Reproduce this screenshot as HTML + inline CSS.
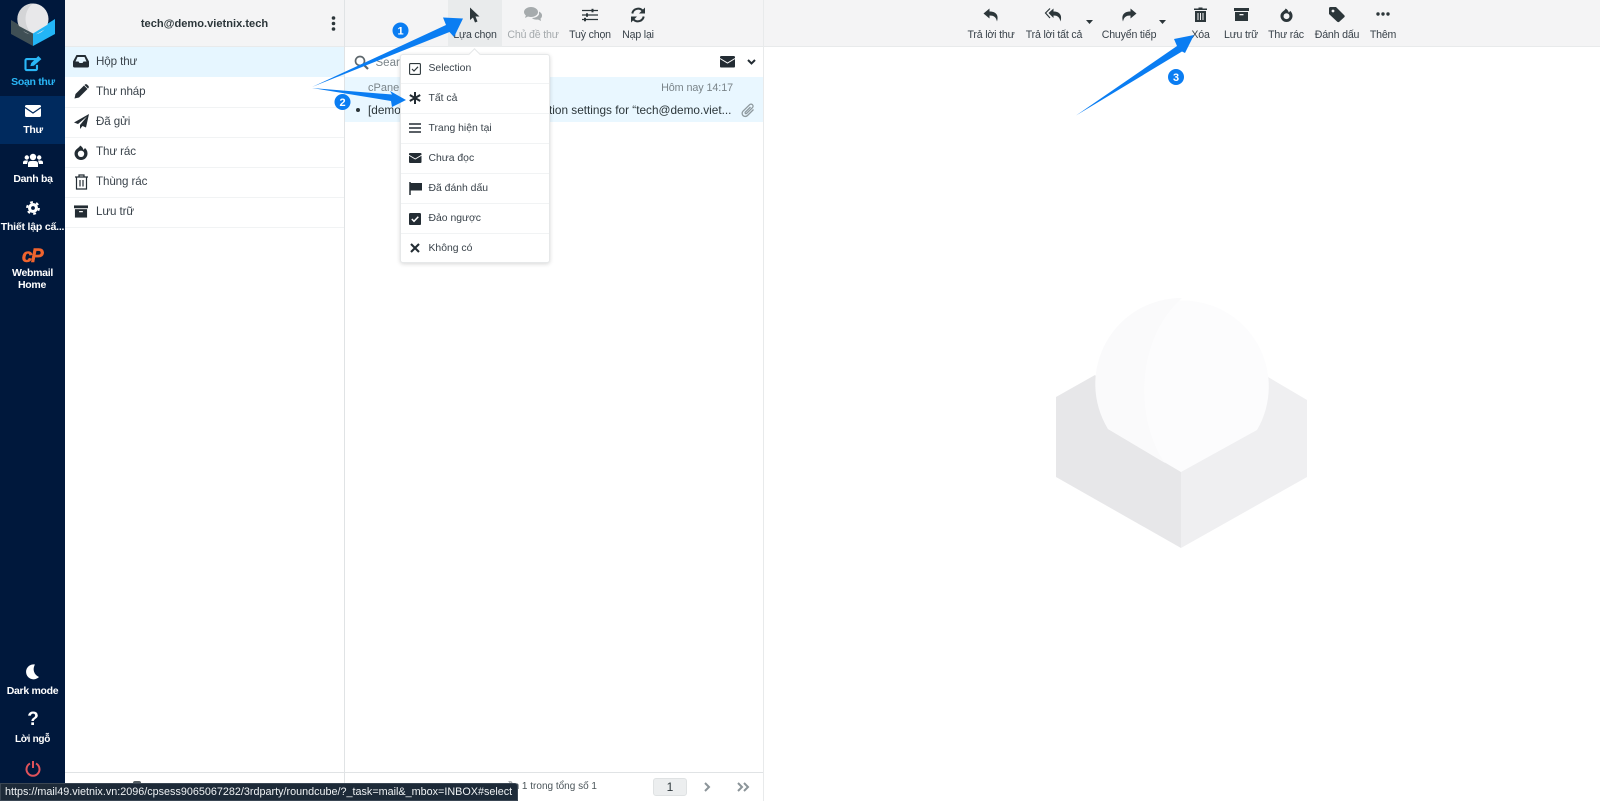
<!DOCTYPE html>
<html lang="vi"><head><meta charset="utf-8"><title>Roundcube Webmail</title>
<style>
*{box-sizing:border-box}
html,body{margin:0;padding:0;width:1600px;height:801px;overflow:hidden;background:#fff;font-family:"Liberation Sans","Noto Sans CJK SC",sans-serif;color:#2c363a}
.a{position:absolute}
svg{position:absolute;overflow:visible}
.t{position:absolute;white-space:nowrap;line-height:14px}
.c{transform:translateX(-50%)}
.nav{color:#fff;font-size:10.5px;font-weight:bold;line-height:13px;text-align:center;letter-spacing:-.3px}
.tb{font-size:10.6px;color:#39424a;letter-spacing:-.18px}
.f{font-size:11.6px;color:#39424a;left:96px;letter-spacing:-.1px}
.m{font-size:10.4px;color:#39424a;left:428.5px}
.ln{position:absolute;height:1px;background:#f1f3f4}
</style></head><body>

<!-- panels -->
<div class="a" style="left:0;top:0;width:65px;height:801px;background:#00183c"></div>
<div class="a" style="left:0;top:96px;width:65px;height:48px;background:#002a5e"></div>
<div class="a" style="left:65px;top:0;width:1535px;height:47px;background:#f4f4f5;border-bottom:1px solid #e8eaeb"></div>
<div class="a" style="left:65px;top:47px;width:280px;height:30px;background:#e6f6ff"></div>
<div class="a" style="left:345px;top:77px;width:418px;height:45px;background:#e9f7ff"></div>
<div class="a" style="left:344px;top:0;width:1px;height:801px;background:#e0e3e5"></div>
<div class="a" style="left:763px;top:0;width:1px;height:801px;background:#e8eaeb"></div>
<div class="a" style="left:448px;top:0;width:54px;height:47px;background:#e9ebec"></div>
<div class="a" style="left:65px;top:772px;width:698px;height:1px;background:#e0e3e5"></div>

<!-- logo -->
<svg style="left:0;top:0" width="65" height="50" viewBox="0 0 65 50">
<path d="M11 20 L33 33 V46 L11 34Z" fill="#3f4f55"/><path d="M55 19 L33 33 V46 L55 34Z" fill="#22b5f7"/>
<circle cx="33" cy="19" r="15.500" fill="#e8e8ea"/><path d="M33 3.500 A15.500 15.500 0 0 0 21 29 L31 33 C23 24 24 10 33 3.500Z" fill="#d4d5d7"/>
<path d="M19 27L33 33.500L47 27L47 36L33 46L19 36Z" fill="none"/>
<path d="M19 26L33 33.500V36L17 28Z" fill="#3f4f55"/><path d="M47 25L33 33.500V36L49 27Z" fill="#22b5f7"/>
</svg>

<!-- sidebar -->
<svg style="left:24px;top:56px" width="18" height="15" viewBox="0 0 20 17"><path d="M14 3.500H3A1.500 1.500 0 0 0 1.500 5V14.500A1.500 1.500 0 0 0 3 16H13A1.500 1.500 0 0 0 14.500 14.500V10" fill="none" stroke="#29b6f6" stroke-width="2.400"/><path d="M7 11.500 L8 8 L16 0 L19.500 3.500 L11 11Z" fill="#29b6f6"/></svg>
<div class="t c nav" style="left:33px;top:76px;color:#29b6f6">Soạn thư</div>
<svg style="left:25px;top:105px" width="16" height="13" viewBox="0 0 16 13"><rect width="16" height="12" rx="1.500" fill="#fff"/><path d="M0 2.500 L8 8 L16 2.500" fill="none" stroke="#002a5e" stroke-width="1.300"/></svg>
<div class="t c nav" style="left:33px;top:124px">Thư</div>
<svg style="left:23px;top:153px" width="20" height="14" viewBox="0 0 20 14"><circle cx="10" cy="4" r="3.200" fill="#fff"/><circle cx="3.800" cy="4.500" r="2.200" fill="#fff"/><circle cx="16.200" cy="4.500" r="2.200" fill="#fff"/><path d="M5 14V10.500Q5 8 8 8H12Q15 8 15 10.500V14Z" fill="#fff"/><path d="M0 11V9.500Q0 7.500 2.500 7.500H5L4 11ZM20 11V9.500Q20 7.500 17.500 7.500H15L16 11Z" fill="#fff"/></svg>
<div class="t c nav" style="left:33px;top:173px">Danh bạ</div>
<svg style="left:26px;top:201px" width="14" height="14" viewBox="0 0 14 14"><circle cx="7" cy="7" r="5" fill="#fff"/><circle cx="7" cy="7" r="5.900" fill="none" stroke="#fff" stroke-width="2" stroke-dasharray="2.800 3.380"/><circle cx="7" cy="7" r="1.900" fill="#00183c"/></svg>
<div class="t c nav" style="left:32.500px;top:221px;font-size:10.500px;letter-spacing:-.2px">Thiết lập cấ...</div>
<div class="t c" style="left:32px;top:247px;font:italic bold 19px/19px 'Liberation Sans',sans-serif;color:#f0642e;letter-spacing:-1.500px;-webkit-text-stroke:.5px #f0642e">cP</div>
<div class="t c nav" style="left:32.500px;top:267px">Webmail</div>
<div class="t c nav" style="left:32px;top:279px">Home</div>
<svg style="left:25px;top:664px" width="15" height="15" viewBox="0 0 15 15"><path d="M10 0.500A7.500 7.500 0 1 0 14 13 A8.500 8.500 0 0 1 10 0.500Z" fill="#fff"/></svg>
<div class="t c nav" style="left:32.500px;top:685px">Dark mode</div>
<div class="t c" style="left:33px;top:710px;font:bold 19px/19px 'Liberation Sans',sans-serif;color:#fff">?</div>
<div class="t c nav" style="left:32.500px;top:733px;font-size:10px">Lời ngỗ</div>
<svg style="left:25px;top:760px" width="16" height="16" viewBox="0 0 16 16"><path d="M5 3.500A6.500 6.500 0 1 0 11 3.500" fill="none" stroke="#e0535b" stroke-width="2"/><path d="M8 1V8" stroke="#e0535b" stroke-width="2"/></svg>

<!-- account header -->
<div class="t c" style="left:204.500px;top:17px;font-size:11.100px;font-weight:bold;color:#2c363a">tech@demo.vietnix.tech</div>
<svg style="left:331px;top:16px" width="5" height="15" viewBox="0 0 5 15"><circle cx="2.500" cy="2" r="1.800" fill="#2c363a"/><circle cx="2.500" cy="7.500" r="1.800" fill="#2c363a"/><circle cx="2.500" cy="13" r="1.800" fill="#2c363a"/></svg>

<!-- folders -->
<div class="ln" style="left:65px;top:107px;width:279px"></div><div class="ln" style="left:65px;top:137px;width:279px"></div><div class="ln" style="left:65px;top:167px;width:279px"></div><div class="ln" style="left:65px;top:197px;width:279px"></div><div class="ln" style="left:65px;top:227px;width:279px"></div>
<svg style="left:73px;top:54px" width="16" height="14" viewBox="0 0 16 14"><path d="M3.500 1H12.500L16 7.500V12Q16 13.500 14.500 13.500H1.500Q0 13.500 0 12V7.500Z" fill="#232c33"/><path d="M2.500 7.500L4.500 3H11.500L13.500 7.500H10.500L9.500 9H6.500L5.500 7.500Z" fill="#e6f6ff"/></svg>
<div class="t f" style="top:55px">Hộp thư</div>
<svg style="left:74px;top:84px" width="15" height="15" viewBox="0 0 15 15"><path d="M0.500 14.500L1.500 10L10 1.500L13.500 5L5 13.500Z" fill="#232c33"/><path d="M11 0.500Q12 -0.300 13 0.500L14.500 2Q15.300 3 14.500 4L14 4.500L10.500 1Z" fill="#232c33"/></svg>
<div class="t f" style="top:85px">Thư nháp</div>
<svg style="left:74px;top:114px" width="15" height="15" viewBox="0 0 15 15"><path d="M15 0L0 8.500L4 10L13 2.500L6 11V15L8.500 12L12 13.500Z" fill="#232c33"/></svg>
<div class="t f" style="top:115px">Đã gửi</div>
<svg style="left:74px;top:145px" width="14" height="15" viewBox="0 0 14 15"><path d="M6 0.500C6 2.500 0.500 4 0.500 8.500A6.500 6.500 0 0 0 13.500 8.500C13.500 6 12.500 4.500 11 3L9.500 5C9 3 8 1.500 6 0.500Z" fill="#232c33"/><circle cx="7" cy="8.800" r="3.200" fill="#fff"/></svg>
<div class="t f" style="top:145px">Thư rác</div>
<svg style="left:75px;top:174px" width="13" height="16" viewBox="0 0 13 16"><path d="M0 3H13M4 3V1H9V3M1.500 3V15H11.500V3M5 6V12.500M8 6V12.500" fill="none" stroke="#232c33" stroke-width="1.200"/></svg>
<div class="t f" style="top:175px">Thùng rác</div>
<svg style="left:74px;top:205px" width="14" height="13" viewBox="0 0 15 13"><rect width="15" height="3" fill="#232c33"/><rect x="1" y="4" width="13" height="9" fill="#232c33"/><rect x="5.500" y="6" width="4" height="1.300" fill="#fff"/></svg>
<div class="t f" style="top:205px">Lưu trữ</div>

<!-- list toolbar -->
<svg style="left:469px;top:7px" width="11" height="16" viewBox="0 0 11 16"><path d="M1 0.500V13L4 10.500L6 15.500L8.500 14.500L6.500 9.500H10.500Z" fill="#2c363a"/></svg>
<div class="t c tb" style="left:475px;top:27.500px">Lựa chọn</div>
<svg style="left:524px;top:7px" width="18" height="15" viewBox="0 0 18 15"><ellipse cx="7" cy="5" rx="7" ry="5" fill="#a6abad"/><path d="M2 8L1 11L5 9Z" fill="#a6abad"/><path d="M15 4.500Q18 6 18 8.500Q18 10.500 16.500 11.500L17 14L14 12.500Q10 13 8 11Q13 11 15 7.500Z" fill="#a6abad"/></svg>
<div class="t c tb" style="left:533px;top:27.500px;color:#a5aaad">Chủ đề thư</div>
<svg style="left:582px;top:8px" width="16" height="14" viewBox="0 0 16 14"><path d="M0 2.500H16M0 7H16M0 11.500H16" stroke="#2c363a" stroke-width="1.300"/><rect x="9.500" y="0.800" width="2" height="3.500" fill="#2c363a"/><rect x="4" y="5.300" width="2" height="3.500" fill="#2c363a"/><rect x="2" y="9.800" width="2" height="3.500" fill="#2c363a"/></svg>
<div class="t c tb" style="left:590px;top:27.500px">Tuỳ chọn</div>
<svg style="left:630px;top:7px" width="16" height="16" viewBox="0 0 16 16"><path d="M2.300 6.500A6 6 0 0 1 12.500 3.500" fill="none" stroke="#2c363a" stroke-width="2"/><path d="M15 0.500V6.500H9Z" fill="#2c363a"/><path d="M13.700 9.500A6 6 0 0 1 3.500 12.500" fill="none" stroke="#2c363a" stroke-width="2"/><path d="M1 15.500V9.500H7Z" fill="#2c363a"/></svg>
<div class="t c tb" style="left:638px;top:27.500px">Nạp lại</div>

<!-- search row -->
<svg style="left:354px;top:55px" width="15" height="15" viewBox="0 0 15 15"><circle cx="6" cy="6" r="4.500" fill="none" stroke="#5d676c" stroke-width="1.700"/><path d="M9.500 9.500L14 14" stroke="#5d676c" stroke-width="2.200"/></svg>
<div class="t" style="left:375.500px;top:55.500px;font-size:11.500px;color:#7a8489">Sear</div>
<svg style="left:720px;top:56px" width="15" height="12" viewBox="0 0 15 12"><rect width="15" height="11.500" rx="1.300" fill="#232c33"/><path d="M0 2.500L7.500 7L15 2.500" fill="none" stroke="#fff" stroke-width="1"/></svg>
<svg style="left:746.500px;top:59px" width="9" height="6" viewBox="0 0 9 6"><path d="M1 1L4.500 4.500L8 1" fill="none" stroke="#232c33" stroke-width="2"/></svg>

<!-- message -->
<div class="t" style="left:368px;top:81px;font-size:11px;color:#7a8489">cPanel</div>
<div class="t" style="right:867px;top:81px;font-size:10.800px;letter-spacing:-.1px;color:#7a8489">Hôm nay 14:17</div>
<div class="a" style="left:356px;top:108px;width:4px;height:4px;border-radius:50%;background:#2c363a"></div>
<div class="t" style="left:368px;top:103px;font-size:11.800px;color:#2c363a">[demo</div>
<div class="t" style="left:549px;top:103px;font-size:11.800px;color:#2c363a">tion settings for “tech@demo.viet...</div>
<svg style="left:741px;top:103px" width="14" height="15" viewBox="0 0 14 15"><path d="M12.500 6.500L6.500 12.500A3 3 0 0 1 2 8.200L8.500 1.800A2 2 0 0 1 11.500 4.600L5.500 10.500A0.900 0.900 0 0 1 4.200 9.300L9.500 4" fill="none" stroke="#8e999e" stroke-width="1.300"/></svg>

<!-- footer -->
<div class="a" style="left:133px;top:781px;width:8px;height:6px;border-radius:2px 2px 0 0;background:#555e63"></div>
<div class="t" style="right:1003px;top:780px;font-size:10px;color:#4a5459">ền 1 trong tổng số 1</div>
<div class="a" style="left:653px;top:778px;width:34px;height:18px;background:#eceeef;border:1px solid #dfe2e3;border-radius:3px;text-align:center;font-size:12px;line-height:16px;color:#2c363a">1</div>
<svg style="left:704px;top:782px" width="7" height="10" viewBox="0 0 7 10"><path d="M1 1L5 5L1 9" fill="none" stroke="#8b9499" stroke-width="2"/></svg>
<svg style="left:737px;top:782px" width="13" height="10" viewBox="0 0 13 10"><path d="M1 1L5 5L1 9M7 1L11 5L7 9" fill="none" stroke="#8b9499" stroke-width="2"/></svg>

<!-- content toolbar -->
<svg style="left:983px;top:8px" width="16" height="14" viewBox="0 0 16 14"><path d="M6.500 0.500L0.500 5.500L6.500 10.500V7.500C11 7.500 13 9 14 13.500C16 7 13 3.500 6.500 3.500Z" fill="#2c363a"/></svg>
<div class="t c tb" style="left:991px;top:27.500px">Trả lời thư</div>
<svg style="left:1045px;top:8px" width="17" height="14" viewBox="0 0 17 14"><path d="M8.500 0.500L3.500 5L8.500 10V7.500C12.500 7.500 14.500 9 15.500 13.500C17.500 7 14.500 3.500 8.500 3.500Z" fill="#2c363a"/><path d="M5 0.500L0.500 5L5 10" fill="none" stroke="#2c363a" stroke-width="1.200"/></svg>
<div class="t c tb" style="left:1054px;top:27.500px">Trả lời tất cả</div>
<svg style="left:1086px;top:20px" width="7" height="4" viewBox="0 0 7 4"><path d="M0 0H7L3.500 4Z" fill="#2c363a"/></svg>
<svg style="left:1121px;top:8px" width="16" height="14" viewBox="0 0 16 14"><path d="M9.500 0.500L15.500 5.500L9.500 10.500V7.500C5 7.500 3 9 2 13.500C0 7 3 3.500 9.500 3.500Z" fill="#2c363a"/></svg>
<div class="t c tb" style="left:1129px;top:27.500px">Chuyển tiếp</div>
<svg style="left:1159px;top:20px" width="7" height="4" viewBox="0 0 7 4"><path d="M0 0H7L3.500 4Z" fill="#2c363a"/></svg>
<svg style="left:1194px;top:7px" width="13" height="15" viewBox="0 0 13 15"><path d="M0 1.500H4.500V0.500H8.500V1.500H13V3H0Z" fill="#2c363a"/><path d="M1 4H12V15H1Z" fill="#2c363a"/><path d="M4 6V13M6.500 6V13M9 6V13" stroke="#f4f4f5" stroke-width="1"/></svg>
<div class="t c tb" style="left:1200.500px;top:27.500px">Xóa</div>
<svg style="left:1233.500px;top:8px" width="15" height="13" viewBox="0 0 15 13"><rect width="15" height="3" fill="#2c363a"/><rect x="1" y="4" width="13" height="9" fill="#2c363a"/><rect x="5.500" y="6" width="4" height="1.300" fill="#f4f4f5"/></svg>
<div class="t c tb" style="left:1241px;top:27.500px">Lưu trữ</div>
<svg style="left:1279.500px;top:8px" width="13" height="14" viewBox="0 0 14 15"><path d="M6 0.500C6 2.500 0.500 4 0.500 8.500A6.500 6.500 0 0 0 13.500 8.500C13.500 6 12.500 4.500 11 3L9.500 5C9 3 8 1.500 6 0.500Z" fill="#2c363a"/><circle cx="7" cy="8.800" r="3.200" fill="#f4f4f5"/></svg>
<div class="t c tb" style="left:1286px;top:27.500px">Thư rác</div>
<svg style="left:1329px;top:7px" width="16" height="15" viewBox="0 0 16 15"><path d="M0 1.500Q0 0 1.500 0H7L15.500 8.500Q16 9.500 15.500 10L10 15Q9 15.500 8 14.500L0 7Z" fill="#2c363a"/><circle cx="4" cy="4" r="1.400" fill="#f4f4f5"/></svg>
<div class="t c tb" style="left:1337px;top:27.500px">Đánh dấu</div>
<svg style="left:1376px;top:12px" width="14" height="4" viewBox="0 0 14 4"><circle cx="2" cy="2" r="1.700" fill="#2c363a"/><circle cx="7" cy="2" r="1.700" fill="#2c363a"/><circle cx="12" cy="2" r="1.700" fill="#2c363a"/></svg>
<div class="t c tb" style="left:1383px;top:27.500px">Thêm</div>

<!-- watermark -->
<svg style="left:0;top:0" width="1600" height="801" viewBox="0 0 1600 801">
<path d="M1056 397L1095 375L1181 472V548L1056 477Z" fill="#e7e7e9"/>
<path d="M1307 400L1268 377L1181 472V548L1307 477Z" fill="#efeff1"/>
<path d="M1108 429A86 86 0 1 1 1257 430L1181 472Z" fill="#fcfcfd"/>
<path d="M1182 298A86 86 0 0 0 1108 429L1165 463C1135 420 1135 340 1182 298Z" fill="#fafafb"/>
</svg>

<!-- dropdown -->
<div class="a" style="left:400px;top:54px;width:150px;height:209px;background:#fff;border:1px solid #e6e8e9;border-radius:3px;box-shadow:0 1px 4px rgba(0,0,0,.16)"></div>
<div class="a" style="left:470px;top:49.500px;width:9px;height:9px;background:#fff;transform:rotate(45deg);border-left:1px solid #e6e8e9;border-top:1px solid #e6e8e9"></div>
<div class="ln" style="left:401px;top:83px;width:148px"></div><div class="ln" style="left:401px;top:113px;width:148px"></div><div class="ln" style="left:401px;top:143px;width:148px"></div><div class="ln" style="left:401px;top:173px;width:148px"></div><div class="ln" style="left:401px;top:203px;width:148px"></div><div class="ln" style="left:401px;top:233px;width:148px"></div>
<svg style="left:409px;top:63px" width="12" height="12" viewBox="0 0 12 12"><rect x="0.600" y="0.600" width="10.800" height="10.800" rx="1" fill="none" stroke="#2c363a" stroke-width="1.100"/><path d="M3 6L5 8L9 3.800" fill="none" stroke="#2c363a" stroke-width="1.200"/></svg>
<div class="t m" style="top:61.500px">Selection</div>
<svg style="left:409px;top:92px" width="12" height="12" viewBox="0 0 12 12"><path d="M6 0V12M0.800 3L11.200 9M11.200 3L0.800 9" stroke="#232c33" stroke-width="2"/></svg>
<div class="t m" style="top:91.500px">Tất cả</div>
<svg style="left:409px;top:123px" width="12" height="10" viewBox="0 0 12 10"><path d="M0 1H12M0 5H12M0 9H12" stroke="#232c33" stroke-width="1.400"/></svg>
<div class="t m" style="top:121.500px">Trang hiện tại</div>
<svg style="left:409px;top:153px" width="12.500" height="10" viewBox="0 0 12.500 10"><rect width="12.500" height="10" rx="1" fill="#232c33"/><path d="M0 2.300L6.250 6L12.500 2.300" fill="none" stroke="#fff" stroke-width=".9"/></svg>
<div class="t m" style="top:151.500px">Chưa đọc</div>
<svg style="left:409px;top:182px" width="13" height="13" viewBox="0 0 13 13"><path d="M1 0V13" stroke="#232c33" stroke-width="1.500"/><path d="M1.500 1H13V8.500H1.500Z" fill="#232c33"/></svg>
<div class="t m" style="top:181.500px">Đã đánh dấu</div>
<svg style="left:409px;top:213px" width="12" height="12" viewBox="0 0 12 12"><rect width="12" height="12" rx="1.300" fill="#232c33"/><path d="M2.800 6L5 8.300L9.300 3.700" fill="none" stroke="#fff" stroke-width="1.500"/></svg>
<div class="t m" style="top:211.500px">Đảo ngược</div>
<svg style="left:410px;top:243px" width="10" height="10" viewBox="0 0 10 10"><path d="M1 1L9 9M9 1L1 9" stroke="#232c33" stroke-width="2.100"/></svg>
<div class="t m" style="top:241.500px">Không có</div>

<!-- arrows -->
<svg style="left:0;top:0" width="1600" height="801" viewBox="0 0 1600 801">
<path d="M312 87L446 25L443 17.500L463 18.500L454 37L449.500 32Z" fill="#0a7df2"/>
<path d="M312 88L392 94.500L390 91L406 100L392 107L391 101Z" fill="#0a7df2"/>
<path d="M1076 115.500L1177 46L1174 39L1194 35L1185 53L1182 51.500Z" fill="#0a7df2"/>
<circle cx="400.500" cy="30.500" r="8" fill="#0a7df2"/><circle cx="342.500" cy="102" r="8" fill="#0a7df2"/><circle cx="1176" cy="77" r="8" fill="#0a7df2"/>
<text x="400.500" y="34.500" text-anchor="middle" font-family="Liberation Sans" font-size="11" font-weight="bold" fill="#fff">1</text>
<text x="342.500" y="106" text-anchor="middle" font-family="Liberation Sans" font-size="11" font-weight="bold" fill="#fff">2</text>
<text x="1176" y="81" text-anchor="middle" font-family="Liberation Sans" font-size="11" font-weight="bold" fill="#fff">3</text>
</svg>

<!-- status tooltip -->
<div class="a" style="left:0;top:783px;width:518px;height:18px;background:#1d2a38;border:1px solid #3a4653;border-radius:0 3px 0 0;color:#eef1f3;font-size:10.800px;line-height:16px;padding-left:4px;white-space:nowrap;overflow:hidden">https://mail49.vietnix.vn:2096/cpsess9065067282/3rdparty/roundcube/?_task=mail&amp;_mbox=INBOX#select</div>
</body></html>
